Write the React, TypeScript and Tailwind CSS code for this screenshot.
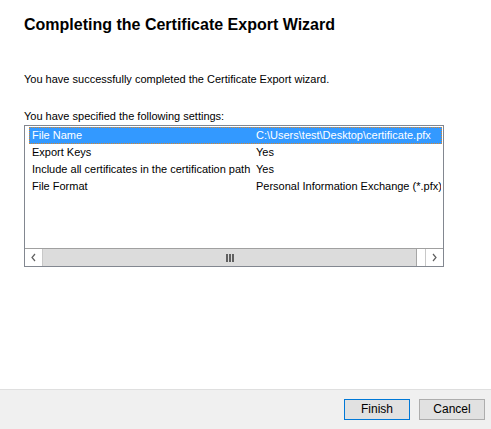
import React from "react";

const rows = [
  ["File Name", "C:\\Users\\test\\Desktop\\certificate.pfx"],
  ["Export Keys", "Yes"],
  ["Include all certificates in the certification path", "Yes"],
  ["File Format", "Personal Information Exchange (*.pfx)"],
];

export default function App() {
  return (
    <div
      className="w-[491px] h-[429px] bg-white flex flex-col text-black overflow-hidden"
      style={{ fontFamily: '"Liberation Sans", Arial, sans-serif' }}
    >
      <div className="flex-1 flex flex-col px-[24px]">
        <div className="mt-[15px] text-[16px] leading-[20px] font-bold">
          Completing the Certificate Export Wizard
        </div>
        <div className="mt-[38px] text-[11px] leading-[13px]">
          You have successfully completed the Certificate Export wizard.
        </div>
        <div className="mt-[24px] text-[11px] leading-[13px]">
          You have specified the following settings:
        </div>
        <div className="mt-[2px] w-[420px] h-[142px] border border-[#828790] flex flex-col">
          <div className="flex-1 pt-[1px] overflow-hidden">
            {rows.map(([k, v], i) => (
              <div
                key={k}
                className={
                  "ml-[4px] mr-[1px] h-[17px] flex text-[11px] leading-[15px] whitespace-nowrap overflow-hidden " +
                  (i === 0
                    ? "bg-[#3399ff] text-white border border-dotted border-[#d8862e]"
                    : "border border-transparent")
                }
              >
                <span className="w-[226px] pl-[2px] shrink-0">{k}</span>
                <span>{v}</span>
              </div>
            ))}
          </div>
          <div className="h-[18px] border-t border-[#a0a0a0] flex">
            <div className="w-[18px] border-r border-[#c8c8c8] flex items-center justify-center">
              <svg width="7" height="9" viewBox="0 0 7 9">
                <path d="M5 1 L2 4.5 L5 8" stroke="#606060" strokeWidth="1.2" fill="none" />
              </svg>
            </div>
            <div className="w-[374px] bg-[#dcdcdc] border-r border-[#a6a6a6] flex items-center justify-center">
              <div className="flex gap-[1px]">
                <div className="w-[2px] h-[8px] bg-[#606060]" />
                <div className="w-[2px] h-[8px] bg-[#606060]" />
                <div className="w-[2px] h-[8px] bg-[#606060]" />
              </div>
            </div>
            <div className="flex-1" />
            <div className="w-[18px] border-l border-[#c8c8c8] flex items-center justify-center">
              <svg width="7" height="9" viewBox="0 0 7 9">
                <path d="M2 1 L5 4.5 L2 8" stroke="#606060" strokeWidth="1.2" fill="none" />
              </svg>
            </div>
          </div>
        </div>
      </div>
      <div className="h-[40px] bg-[#f0f0f0] border-t border-[#dfdfdf] flex justify-end items-start pt-[9px] pr-[6px] gap-[9px]">
        <button className="w-[66px] h-[21px] bg-[#e1e1e1] border border-[#0078d7] text-[12px] leading-[19px] text-black">
          Finish
        </button>
        <button className="w-[66px] h-[21px] bg-[#e1e1e1] border border-[#adadad] text-[12px] leading-[19px] text-black">
          Cancel
        </button>
      </div>
    </div>
  );
}
